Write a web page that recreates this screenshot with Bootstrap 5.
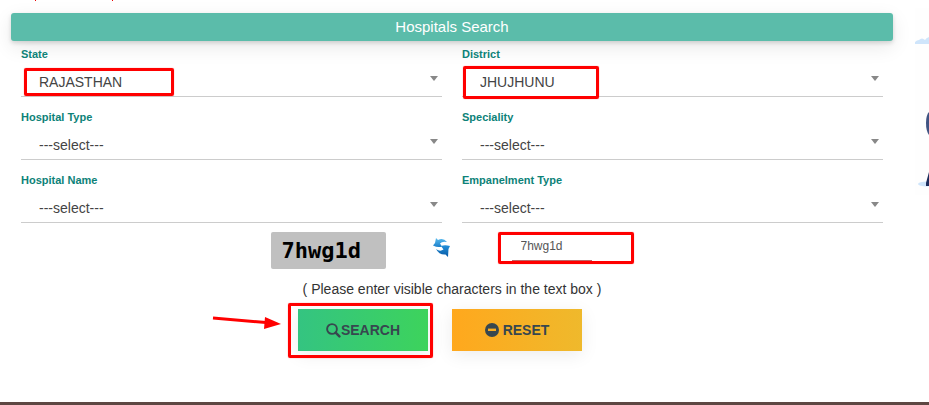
<!DOCTYPE html>
<html lang="en">
<head>
<meta charset="utf-8">
<meta name="viewport" content="width=device-width, initial-scale=1">
<title>Hospitals Search</title>
<link href="https://cdn.jsdelivr.net/npm/bootstrap@5.3.0/dist/css/bootstrap.min.css" rel="stylesheet">
<style>
  body { font-family: "Liberation Sans", Arial, sans-serif; font-size: 14px; line-height: 20px; color: #3f3f3f; background: #fff; }
  .notice-strip { height: 13px; }
  .notice-strip svg, .scene svg, .btn svg, .reload svg { display: block; }
  .search-panel { margin-left: 11px; }
  .panel-title { background: #5bbcaa; color: #fff; font-size: 15px; line-height: 28px; border-radius: 3px; box-shadow: 0 2px 4px rgba(0,0,0,.14), 0 6px 20px rgba(0,0,0,.09); }
  .fields { --bs-gutter-x: 20px; row-gap: 12px; padding-top: 5px; margin-left: 0; margin-right: 0; }
  .field-label { display: block; font-size: 11px; font-weight: 700; line-height: 16px; color: #0d8278; }
  .picker::after { content: ""; position: absolute; right: 4px; top: 14px; border: 4px solid transparent; border-top: 5px solid #888; border-bottom: 0; pointer-events: none; }
  .picker select { appearance: none; display: block; width: 100%; height: 35px; padding: 5px 20px 0 18px; border: 0; border-bottom: 1px solid #ccc; border-radius: 0; background: transparent; color: #444; outline-offset: -2px; }
  .marked { position: absolute; border: 3px solid #f00; border-radius: 2px; box-shadow: 0 0 1px #f55; pointer-events: none; }
  .marked-state { left: 3px; top: 6px; width: 150px; height: 28px; }
  .marked-district { left: 1px; top: 4px; width: 136px; height: 33px; }
  .captcha-line { margin-top: 9px; column-gap: 47px; }
  .captcha-code { width: 115px; height: 37px; padding-left: 11px; background: #c0c0c0; border-radius: 2px; color: #000; font: bold 22px/37px "DejaVu Sans Mono", monospace; }
  .reload { border: 0; background: none; padding: 0; margin-top: -7px; }
  .captcha-box { width: 136px; height: 32px; border: 3px solid #f00; border-radius: 2px; padding-left: 11px; box-shadow: 0 0 1px #f55; margin-top: -5px; }
  .captcha-box input { width: 80px; height: 26px; border: 0; border-bottom: 1px solid #b66; padding: 0 0 3px 9px; font-size: 12px; color: #555; background: transparent; display: block; }
  .hint { padding: 10px 0; color: #333; }
  .action { width: 130px; height: 42px; border: 0; border-radius: 0; padding: 0; font-size: 14px; font-weight: 700; color: #37474f; box-shadow: 0 4px 18px rgba(0,0,0,.08); }
  .action:hover { color: #37474f; }
  .action-search { background: linear-gradient(90deg, #34c481, #3dd35c); }
  .action-reset { background: linear-gradient(90deg, #ffa81d, #efb92c); }
  .marked-search { left: -10px; top: -6px; width: 145px; height: 55px; }
  .pointer-arrow { position: absolute; left: -86px; top: 6px; pointer-events: none; }
  .scene { width: 36px; }
  .page-foot { height: 3px; background: #5d4742; }
</style>
<script src="https://cdn.jsdelivr.net/npm/bootstrap@5.3.0/dist/js/bootstrap.bundle.min.js"></script>
</head>
<body class="d-flex flex-column min-vh-100 overflow-x-hidden">
<div class="d-flex flex-grow-1">
  <main class="flex-grow-1 search-panel">
    <div class="notice-strip">
      <svg width="120" height="13" aria-hidden="true"><path d="M24 0h1v1h-1zM101 0h1v1h-1z" fill="#e00"/></svg>
    </div>
    <form onsubmit="return false">
      <h1 class="panel-title text-center fw-normal m-0">Hospitals Search</h1>
      <div class="row fields">
        <div class="col-6">
          <label class="field-label" for="state">State</label>
          <div class="picker position-relative"><select id="state"><option>RAJASTHAN</option></select><span class="marked marked-state"></span></div>
        </div>
        <div class="col-6">
          <label class="field-label" for="district">District</label>
          <div class="picker position-relative"><select id="district"><option>JHUJHUNU</option></select><span class="marked marked-district"></span></div>
        </div>
        <div class="col-6">
          <label class="field-label" for="htype">Hospital Type</label>
          <div class="picker position-relative"><select id="htype"><option>---select---</option></select></div>
        </div>
        <div class="col-6">
          <label class="field-label" for="speciality">Speciality</label>
          <div class="picker position-relative"><select id="speciality"><option>---select---</option></select></div>
        </div>
        <div class="col-6">
          <label class="field-label" for="hname">Hospital Name</label>
          <div class="picker position-relative"><select id="hname"><option>---select---</option></select></div>
        </div>
        <div class="col-6">
          <label class="field-label" for="etype">Empanelment Type</label>
          <div class="picker position-relative"><select id="etype"><option>---select---</option></select></div>
        </div>
      </div>

      <div class="captcha-line d-flex justify-content-center align-items-center">
        <div class="captcha-code">7hwg1d</div>
        <button type="button" class="reload" aria-label="Reload characters">
          <svg width="18" height="20" viewBox="0 0 18 20">
            <defs>
              <linearGradient id="blueTop" x2="0" y2="1"><stop stop-color="#5bbdf0"/><stop offset="1" stop-color="#1b7fca"/></linearGradient>
              <linearGradient id="blueLow" x2="0" y2="1"><stop stop-color="#2390da"/><stop offset="1" stop-color="#0759a4"/></linearGradient>
            </defs>
            <path d="M3 1L5 3Q10 0 14 5Q9 4 7 6.5L9 9.5Q5 11 0 8.5L2 6Z" fill="url(#blueTop)"/>
            <path d="M8 9Q12 7.5 17 9L15.5 12L15 20L12.5 17.5Q6 18 3 12Q7 15 10.5 12.5Z" fill="url(#blueLow)"/>
          </svg>
        </button>
        <div class="captcha-box"><input type="text" value="7hwg1d" aria-label="Visible characters"></div>
      </div>
      <p class="hint text-center m-0">( Please enter visible characters in the text box )</p>
      <div class="d-flex justify-content-center">
        <div class="position-relative me-4">
          <button type="submit" class="btn action action-search d-flex align-items-center justify-content-center">
            <svg width="15" height="15" viewBox="0 0 15 15" fill="none" stroke="#37474f" aria-hidden="true"><circle cx="6" cy="6" r="4.9" stroke-width="1.9"/><path d="M9.6 9.6L13.4 13.4" stroke-width="2.5" stroke-linecap="round"/></svg>SEARCH
          </button>
          <span class="marked marked-search"></span>
          <svg class="pointer-arrow" width="70" height="18" viewBox="0 0 70 18" aria-hidden="true"><path d="M1 3L54 7.5" stroke="#f00" stroke-width="3"/><path d="M53 2L69 9L52 14Z" fill="#f00"/></svg>
        </div>
        <button type="reset" class="btn action action-reset d-flex align-items-center justify-content-center gap-1 me-4">
          <svg width="14" height="14" viewBox="0 0 14 14" aria-hidden="true"><circle cx="7" cy="7" r="7" fill="#37474f"/><rect x="3" y="5.6" width="8" height="2.4" fill="#fbad20"/></svg>RESET
        </button>
      </div>
    </form>
  </main>
  <aside class="scene flex-shrink-0">
    <svg width="36" height="200" viewBox="0 0 36 200" aria-hidden="true">
      <path d="M22 8H36V195H22Z" fill="#fefefe"/>
      <path d="M22 44V42Q24 40 26 40Q29 37 32 40Q33 38 36 37V44Z" fill="#cfe5fb"/>
      <path d="M36 112Q33 115 33 123Q33 131 36 135Z" fill="#3f5382"/>
      <ellipse cx="34" cy="184" rx="9" ry="2.4" fill="#cfe5fb"/>
      <path d="M36 172L33 183V186H36Z" fill="#1d2d5c"/>
    </svg>
  </aside>
</div>
<footer class="page-foot"></footer>
</body>
</html>
